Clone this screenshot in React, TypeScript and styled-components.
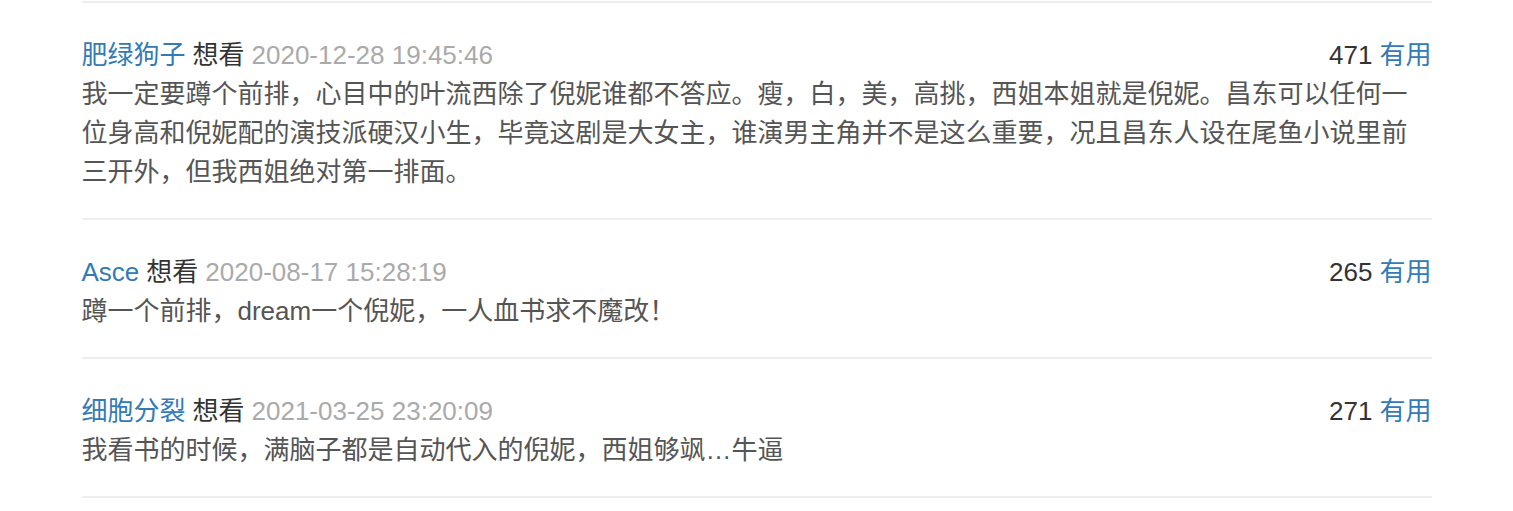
import * as React from "react";
import styled, { createGlobalStyle } from "styled-components";

const GlobalStyle = createGlobalStyle`
  html, body {
    margin: 0;
    padding: 0;
    background: #fff;
  }
  body {
    font-family: "Liberation Sans", Arial, "Noto Sans CJK SC", sans-serif;
    font-size: 26px;
    color: #333;
  }
`;

const CommentList = styled.ul`
  list-style: none;
  width: 1350px;
  margin: 1px auto 0;
  padding: 0;
  border-bottom: 2px solid #eee;
`;

const CommentItem = styled.li`
  border-top: 2px solid #eee;
  padding: 32px 0 26px;
`;

const CommentHeader = styled.div`
  display: flex;
  justify-content: space-between;
  align-items: center;
  height: 40px;
  line-height: 40px;
  white-space: nowrap;
`;

const Author = styled.span`
  display: flex;
  align-items: baseline;
  gap: 7px;
`;

const Link = styled.a`
  color: #337ab7;
  text-decoration: none;
`;

const Status = styled.span`
  color: #333;
`;

const Time = styled.span`
  color: #aaa;
`;

const Votes = styled.span`
  display: flex;
  align-items: baseline;
  gap: 7px;
  color: #333;
`;

const Content = styled.p`
  margin: 0;
  line-height: 39px;
  color: #555;
`;

type Comment = {
  name: string;
  status: string;
  time: string;
  votes: number;
  text: string;
};

const comments: Comment[] = [
  {
    name: "肥绿狗子",
    status: "想看",
    time: "2020-12-28 19:45:46",
    votes: 471,
    text: "我一定要蹲个前排，心目中的叶流西除了倪妮谁都不答应。瘦，白，美，高挑，西姐本姐就是倪妮。昌东可以任何一位身高和倪妮配的演技派硬汉小生，毕竟这剧是大女主，谁演男主角并不是这么重要，况且昌东人设在尾鱼小说里前三开外，但我西姐绝对第一排面。",
  },
  {
    name: "Asce",
    status: "想看",
    time: "2020-08-17 15:28:19",
    votes: 265,
    text: "蹲一个前排，dream一个倪妮，一人血书求不魔改！",
  },
  {
    name: "细胞分裂",
    status: "想看",
    time: "2021-03-25 23:20:09",
    votes: 271,
    text: "我看书的时候，满脑子都是自动代入的倪妮，西姐够飒…牛逼",
  },
];

export default function App() {
  return (
    <>
      <GlobalStyle />
      <CommentList>
        {comments.map((c) => (
          <CommentItem key={c.time}>
            <CommentHeader>
              <Author>
                <Link href="#">{c.name}</Link>
                <Status>{c.status}</Status>
                <Time>{c.time}</Time>
              </Author>
              <Votes>
                {c.votes}
                <Link href="#">有用</Link>
              </Votes>
            </CommentHeader>
            <Content>{c.text}</Content>
          </CommentItem>
        ))}
      </CommentList>
    </>
  );
}
